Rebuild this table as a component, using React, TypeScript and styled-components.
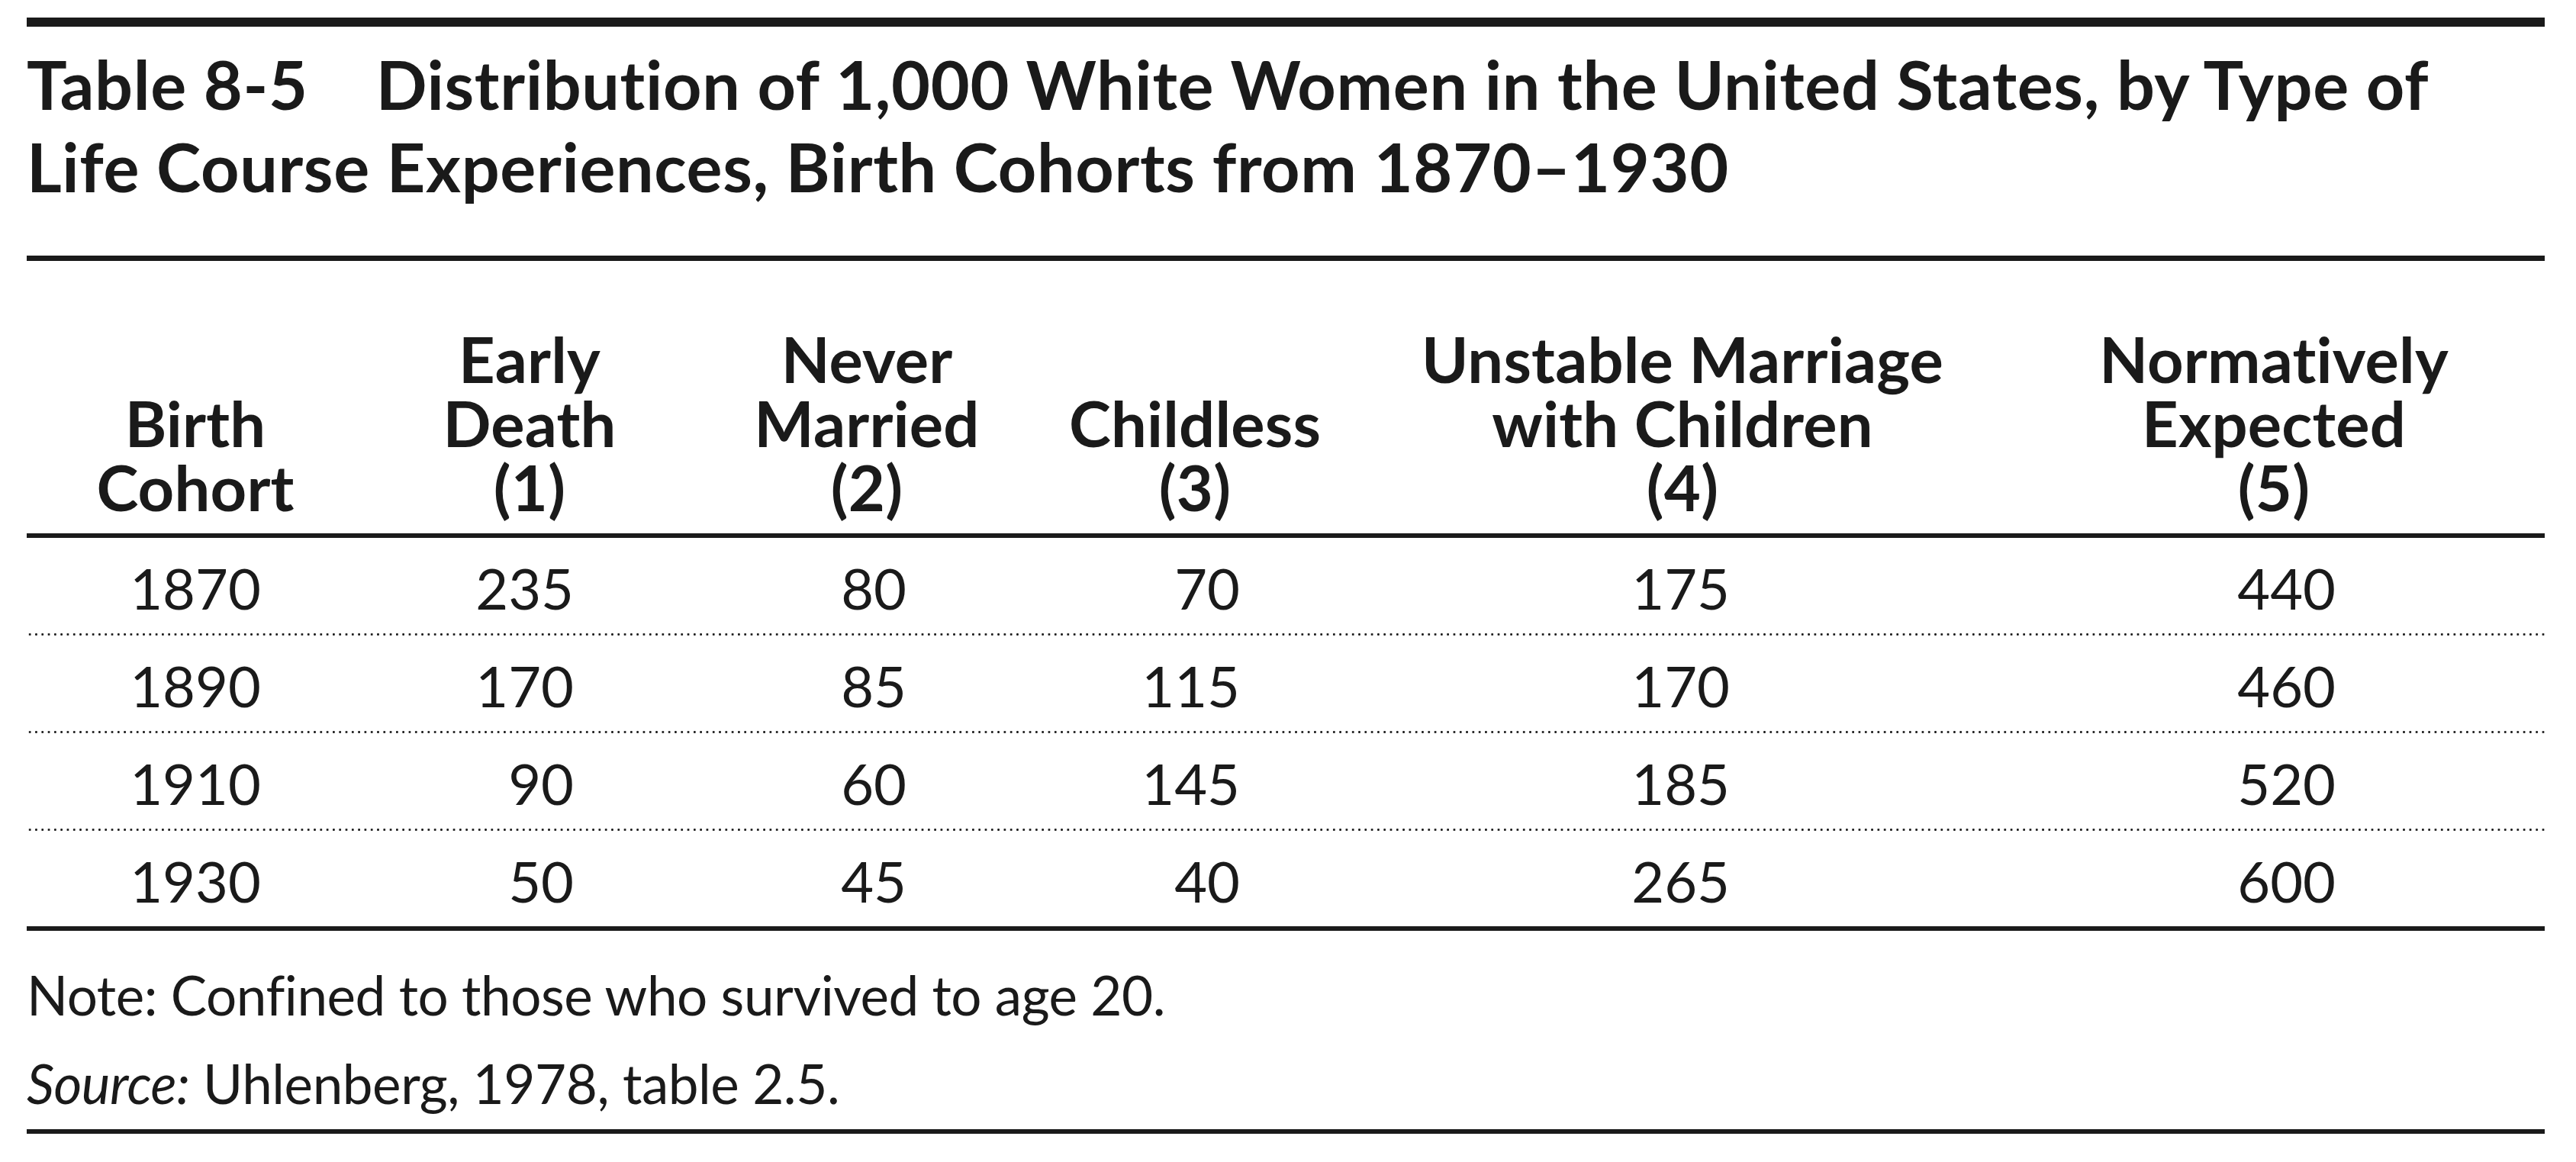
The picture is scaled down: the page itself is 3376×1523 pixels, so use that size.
import React from "react";
import styled, { createGlobalStyle } from "styled-components";

const INK = "#1a1a1a";

const GlobalStyle = createGlobalStyle`
  html, body {
    margin: 0;
    padding: 0;
    background: #ffffff;
  }
  body {
    font-family: "Lato", "Open Sans", "Liberation Sans", sans-serif;
    color: ${INK};
  }
`;

const Page = styled.div`
  box-sizing: border-box;
  width: 3376px;
  min-height: 1523px;
  padding: 23px 41px 0 35px;
  background: #ffffff;
`;

const Rule = styled.div<{ $thick: number; $mt?: number }>`
  height: ${(p) => p.$thick}px;
  margin-top: ${(p) => p.$mt ?? 0}px;
  background: ${INK};
`;

const Title = styled.h1`
  margin: 21px 0 63px 0;
  font-family: "Lato", "Open Sans", sans-serif;
  font-weight: 700;
  font-size: 88px;
  line-height: 108px;
  letter-spacing: 0.65px;
  color: ${INK};
  white-space: nowrap;
`;

const TitleLabel = styled.span`
  margin-right: 89px;
`;

const Grid = styled.div`
  display: grid;
  grid-template-columns: 442px 434px 450px 410px 868px 696px;
`;

const HeadRow = styled(Grid)`
  padding: 86px 0 19px 0;
  align-items: end;
`;

const HeadCell = styled.div<{ $pr?: number }>`
  font-weight: 700;
  font-size: 83px;
  line-height: 84px;
  letter-spacing: 0.2px;
  text-align: center;
  padding-right: ${(p) => p.$pr ?? 0}px;
  white-space: nowrap;
`;

const BodyRow = styled(Grid)`
  height: 125px;
  align-items: center;
`;

const NumCell = styled.div<{ $pr: number; $center?: boolean }>`
  font-weight: 400;
  font-size: 74px;
  line-height: 89px;
  padding-top: 6px;
  text-align: ${(p) => (p.$center ? "center" : "right")};
  padding-right: ${(p) => (p.$center ? 0 : p.$pr)}px;
  font-variant-numeric: tabular-nums;
`;

const DotRule = styled.div`
  height: 3px;
  background-image: radial-gradient(circle at center, ${INK} 1.2px, rgba(26, 26, 26, 0) 1.75px);
  background-size: 8.3px 3px;
  background-repeat: repeat-x;
`;

const Footer = styled.div`
  padding-top: 26px;
`;

const FootLine = styled.p`
  margin: 0;
  font-weight: 400;
  font-size: 71px;
  line-height: 116px;
  letter-spacing: -0.45px;
  white-space: nowrap;
`;

const Em = styled.i`
  font-style: italic;
`;

type Col = { head: string[]; pr: number; headPr?: number; center?: boolean };

const cols: Col[] = [
  { head: ["Birth", "Cohort"], pr: 0, center: true },
  { head: ["Early", "Death", "(1)"], pr: 159 },
  { head: ["Never", "Married", "(2)"], pr: 173 },
  { head: ["Childless", "(3)"], pr: 146 },
  { head: ["Unstable Marriage", "with Children", "(4)"], pr: 372 },
  { head: ["Normatively", "Expected", "(5)"], pr: 274, headPr: 14 },
];

const rows: string[][] = [
  ["1870", "235", "80", "70", "175", "440"],
  ["1890", "170", "85", "115", "170", "460"],
  ["1910", "90", "60", "145", "185", "520"],
  ["1930", "50", "45", "40", "265", "600"],
];

export default function App() {
  return (
    <>
      <GlobalStyle />
      <Page>
        <Rule $thick={12} />
        <Title>
          <TitleLabel>Table 8-5</TitleLabel>Distribution of 1,000 White Women in the United States, by Type of
          <br />
          Life Course Experiences, Birth Cohorts from 1870–1930
        </Title>
        <Rule $thick={7} />
        <HeadRow>
          {cols.map((c, i) => (
            <HeadCell key={i} $pr={c.headPr}>
              {c.head.map((line, j) => (
                <React.Fragment key={j}>
                  {j > 0 && <br />}
                  {line}
                </React.Fragment>
              ))}
            </HeadCell>
          ))}
        </HeadRow>
        <Rule $thick={6} />
        {rows.map((r, ri) => (
          <React.Fragment key={ri}>
            {ri > 0 && <DotRule />}
            <BodyRow>
              {r.map((v, ci) => (
                <NumCell key={ci} $pr={cols[ci].pr} $center={cols[ci].center}>
                  {v}
                </NumCell>
              ))}
            </BodyRow>
          </React.Fragment>
        ))}
        <Rule $thick={6} />
        <Footer>
          <FootLine>Note: Confined to those who survived to age 20.</FootLine>
          <FootLine>
            <Em>Source:</Em> Uhlenberg, 1978, table 2.5.
          </FootLine>
        </Footer>
        <Rule $thick={6} $mt={2} />
      </Page>
    </>
  );
}
